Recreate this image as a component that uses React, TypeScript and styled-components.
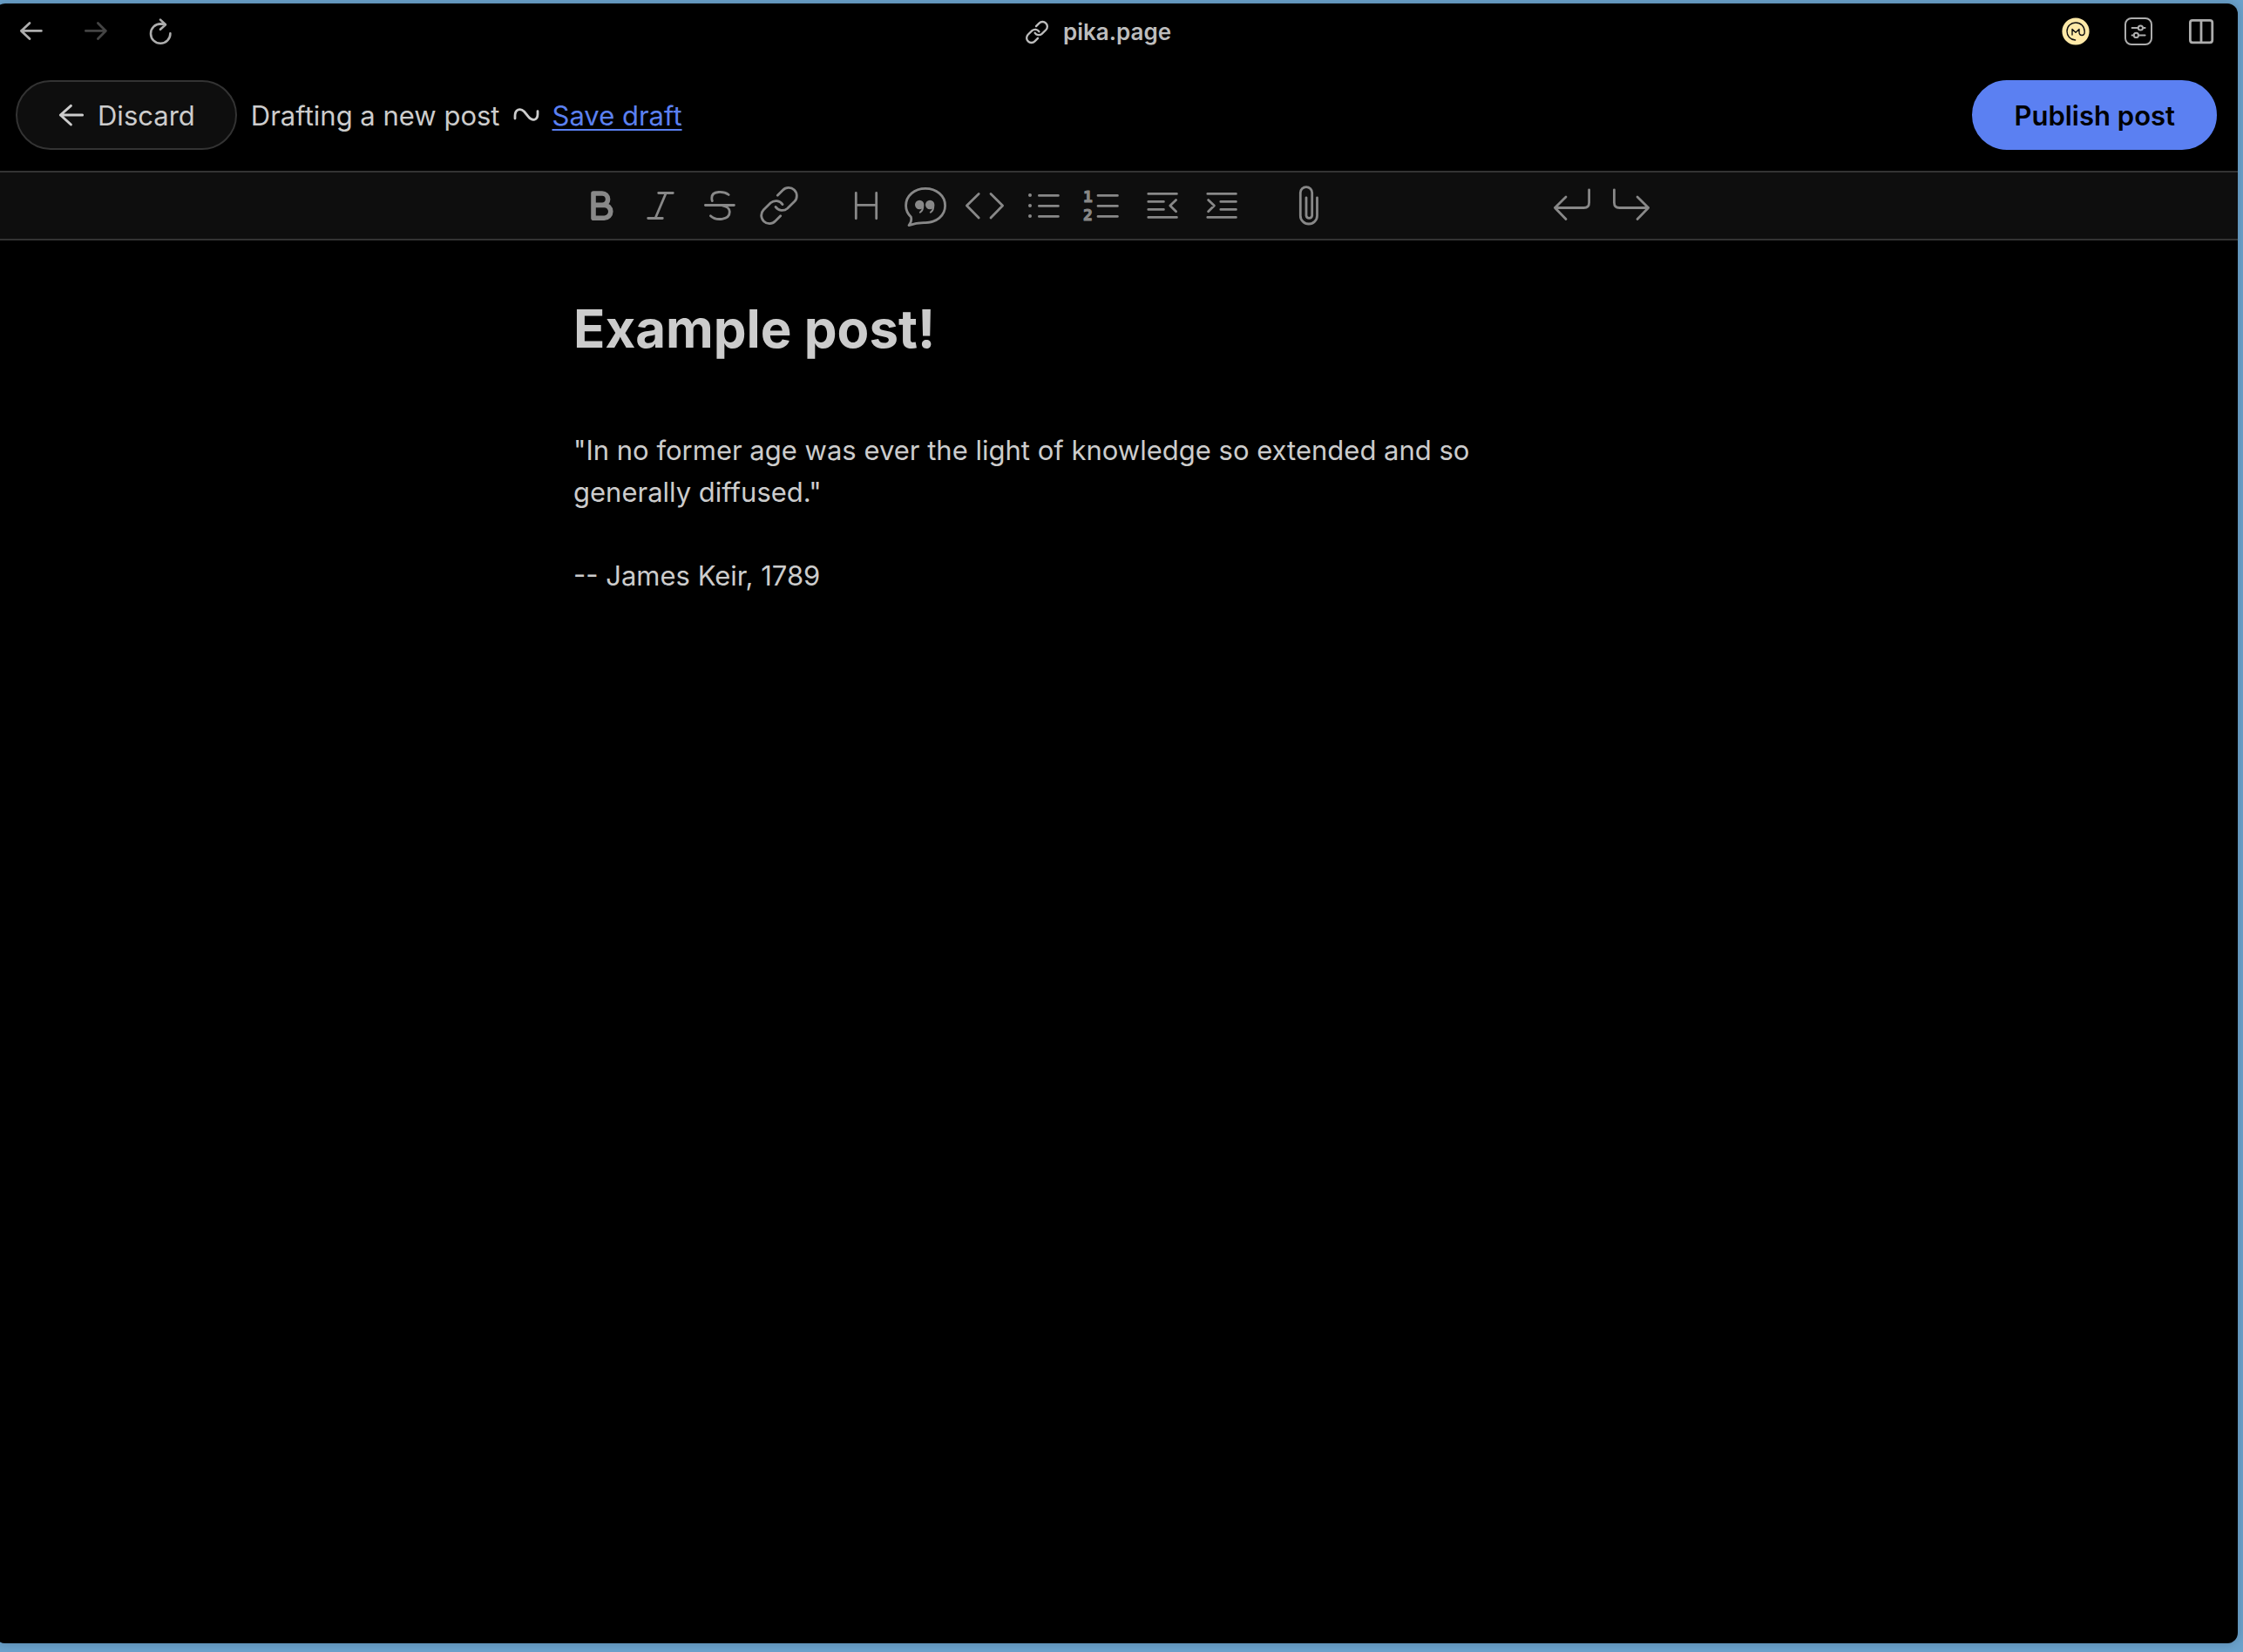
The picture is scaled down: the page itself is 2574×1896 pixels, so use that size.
import React, { useState } from "react";
import styled, { createGlobalStyle } from "styled-components";

const GlobalStyle = createGlobalStyle`
  * { box-sizing: border-box; }
  body {
    margin: 0;
    background: #6ba2cc;
    font-family: Inter, "Liberation Sans", sans-serif;
    color: #ccc;
    overflow-x: hidden;
  }
  button, input, textarea { font: inherit; color: inherit; }
`;

const Desktop = styled.div`
  min-height: 100vh;
  padding: 4px 6px 10px 0;
  display: flex;
  overflow: hidden;
`;

const BrowserWindow = styled.div`
  flex: 1;
  min-width: 0;
  margin-left: -6px;
  background: #000;
  border-radius: 12px;
  box-shadow: 0 0 12px rgba(0, 0, 0, 0.2);
  overflow: hidden;
`;

const BrowserBar = styled.nav`
  height: 64px;
  padding: 0 26px;
  display: grid;
  grid-template-columns: 1fr auto 1fr;
  align-items: center;
`;

const BarGroup = styled.div<{ $end?: boolean }>`
  display: flex;
  gap: ${(p) => (p.$end ? 40 : 42)}px;
  justify-content: ${(p) => (p.$end ? "flex-end" : "flex-start")};
`;

const BarButton = styled.button`
  width: 32px;
  height: 32px;
  padding: 0;
  border: 0;
  background: none;
  color: #adadad;
  display: block;
  &:disabled { color: #444; }
`;

const Address = styled.div`
  display: flex;
  align-items: center;
  gap: 16px;
  padding: 2px 42px 0 0;
  color: #bdbdbd;
  font-size: 26px;
  line-height: 32px;
  font-weight: 600;
`;

const Header = styled.header`
  display: flex;
  align-items: center;
  gap: 16px;
  padding: 24px;
  font-size: 31px;
  line-height: 48px;
`;

const Pill = styled.button<{ $primary?: boolean }>`
  height: 80px;
  padding: 2px 46px 0;
  display: flex;
  align-items: center;
  gap: 14px;
  border-radius: 40px;
  border: 2px solid ${(p) => (p.$primary ? "#5b80f2" : "#333")};
  background: ${(p) => (p.$primary ? "#5b80f2" : "#0e0e0e")};
  color: ${(p) => (p.$primary ? "#000" : "#ccc")};
  font-weight: ${(p) => (p.$primary ? 600 : 400)};
  margin-left: ${(p) => (p.$primary ? "auto" : "0")};
`;

const Status = styled.div`
  display: flex;
  align-items: center;
  gap: 16px;
  padding-top: 2px;
`;

const SaveLink = styled.a`
  color: #5b80f2;
  text-decoration: underline;
  text-decoration-thickness: 2px;
  text-underline-offset: 4px;
`;

const ToolStrip = styled.div`
  border-top: 2px solid #333;
  border-bottom: 2px solid #333;
  background: #0e0e0e;
`;

const Column = styled.div`
  max-width: 1250px;
  margin: 0 auto;
`;

const Tools = styled(Column)`
  height: 76px;
  display: flex;
  align-items: center;
  gap: 32px;
`;

const ToolGroup = styled.div<{ $last?: boolean }>`
  display: flex;
  margin-left: ${(p) => (p.$last ? "auto" : "0")};
`;

const ToolButton = styled.button`
  width: 68px;
  height: 76px;
  padding: 0;
  border: 0;
  background: none;
  color: #888;
  display: flex;
  align-items: center;
  justify-content: center;
`;

const Editor = styled(Column).attrs({ as: "main" })`
  padding: 61px 2px;
  display: flex;
  flex-direction: column;
  gap: 76px;
`;

const TitleInput = styled.input`
  width: 100%;
  height: 80px;
  padding: 0;
  border: 0;
  outline: 0;
  background: none;
  font-size: 60px;
  font-weight: 700;
`;

const BodyInput = styled.textarea`
  width: 100%;
  max-width: 1120px;
  padding: 0;
  border: 0;
  outline: 0;
  resize: none;
  overflow: hidden;
  background: none;
  font-size: 31px;
  line-height: 48px;
  field-sizing: content;
`;

const Line = styled.svg<{ $w?: number }>`
  display: block;
  flex: none;
  overflow: visible;
  fill: none;
  stroke: currentColor;
  stroke-width: ${(p) => p.$w ?? 2.8};
  stroke-linecap: round;
  stroke-linejoin: round;
`;

const Numeral = styled.text`
  fill: currentColor;
  stroke: currentColor;
  stroke-width: 1px;
  font: 700 18px "DejaVu Sans Mono", monospace;
`;

const chain = "M22.3 12.3 L28.3 6.3 A9.3 9.3 0 0 1 41.7 19.3 L33.6 27.2 A9.2 9.2 0 0 1 20 25.4";

const icons = {
  bold: (
    <path
      strokeWidth="5.6"
      d="M15 10 H25 a6.6 6.7 0 0 1 0 13.4 H15 H27.4 a7.4 7.4 0 0 1 0 14.8 H15 V10 Z"
    />
  ),
  italic: <path d="M21.7 9.5 H38.3 M9.7 38.5 H26.3 M30.3 9.5 L18 38.5" />,
  strike: (
    <path d="M7.4 23.5 H40.4 M34.2 11.5 C29 7.6 14.8 6.2 14.8 15.2 C14.8 16.5 14.9 17.6 15.4 18.6 M27 24 C32 25 35.3 27 35.3 31 C35.3 41 19.5 41.5 13.4 35.7" />
  ),
  link: (
    <>
      <path d={chain} />
      <path d={chain} transform="rotate(180 24 24)" />
    </>
  ),
  heading: <path d="M12.3 9.4 V38.8 M35.7 9.4 V38.8 M12.3 23.4 H35.7" />,
  quote: (
    <>
      <path d="M7.4 37 C3.4 33.2 1.6 28.8 1.6 24 C1.6 12.5 11.5 4.4 24 4.4 S46.6 12.5 46.6 24 S36.5 43.6 24 43.6 C19 43.6 14.5 43.2 5 46.6 C7.5 43.5 8.2 40 7.4 37 Z" />
      <circle cx="17.2" cy="23" r="3.8" fill="currentColor" />
      <circle cx="29.2" cy="23" r="3.8" fill="currentColor" />
      <path strokeWidth="2" d="M21.2 23.5 C21.6 27.5 20.4 30 17.8 31.8 M33.2 23.5 C33.6 27.5 32.4 30 29.8 31.8" />
    </>
  ),
  code: <path d="M17.2 10.4 L3.4 24 L17.2 38 M31 10.4 L44.6 24 L31 38" />,
  bullets: (
    <>
      <path d="M18.4 12.4 H40.4 M18.4 24.4 H40.4 M18.4 36.4 H40.4" />
      <path strokeWidth="4" d="M8 12 h.01 M8 24 h.01 M8 36 h.01" />
    </>
  ),
  numbers: (
    <>
      <path d="M18 12.4 H40.4 M18 24.4 H40.4 M18 36.4 H40.4" />
      <Numeral x="1" y="20">1</Numeral>
      <Numeral x="1" y="41">2</Numeral>
    </>
  ),
  outdent: <path d="M7.8 10.4 H40.4 M7.8 19.4 H25.4 M7.8 28.4 H25.4 M7.8 37.4 H40.4 M39.6 17.6 L32.8 24 L39.6 30.8" />,
  indent: <path d="M7.8 10.4 H40.4 M22.8 19.4 H40.4 M22.8 28.4 H40.4 M7.8 37.4 H40.4 M8.6 17.6 L15.4 24 L8.6 30.8" />,
  attach: (
    <path d="M33.5 14.8 V35.4 A9.6 9.6 0 0 1 14.3 35.4 V9.3 A6.7 6.7 0 0 1 27.7 9.3 V35.5 A3.4 3.4 0 0 1 21 35.5 V14.8" />
  ),
  undo: <path d="M43.6 5.8 V20.5 Q43.6 26.5 37.6 26.5 H4.4 M17 14 L4.4 26.5 L17 39.4" />,
  redo: <path d="M4.4 5.8 V20.5 Q4.4 26.5 10.4 26.5 H43.6 M31 14 L43.6 26.5 L31 39.4" />,
};

type IconName = keyof typeof icons;

const groups: [IconName, string][][] = [
  [["bold", "Bold"], ["italic", "Italic"], ["strike", "Strikethrough"], ["link", "Link"]],
  [
    ["heading", "Heading"],
    ["quote", "Quote"],
    ["code", "Code"],
    ["bullets", "Bulleted list"],
    ["numbers", "Numbered list"],
    ["outdent", "Decrease indent"],
    ["indent", "Increase indent"],
  ],
  [["attach", "Attach file"]],
  [["undo", "Undo"], ["redo", "Redo"]],
];

function BarIcon({ children, w = 2.8 }: { children: React.ReactNode; w?: number }) {
  return (
    <Line width="32" height="32" viewBox="0 0 32 32" $w={w} aria-hidden="true">
      {children}
    </Line>
  );
}

export default function App() {
  const [title, setTitle] = useState("Example post!");
  const [body, setBody] = useState(
    '"In no former age was ever the light of knowledge so extended and so generally diffused."\n\n-- James Keir, 1789'
  );

  return (
    <>
      <GlobalStyle />
      <Desktop>
        <BrowserWindow>
          <BrowserBar aria-label="Browser">
            <BarGroup>
              <BarButton aria-label="Back">
                <BarIcon><path d="M4.4 15.4 H27.4 M14 6.4 L4.4 15.4 L14 24.6" /></BarIcon>
              </BarButton>
              <BarButton aria-label="Forward" disabled>
                <BarIcon><path d="M4.4 15.4 H27.4 M18.4 6.4 L27.4 15.4 L18.4 24.6" /></BarIcon>
              </BarButton>
              <BarButton aria-label="Reload">
                <BarIcon w={2.6}>
                  <path d="M27.4 18.4 A11.2 11.2 0 1 1 16.2 7.4 L21.6 8 M16 2.6 L22 8.2 L16 13.8" />
                </BarIcon>
              </BarButton>
            </BarGroup>
            <Address>
              <Line width="28" height="28" viewBox="0 0 48 48" $w={4} aria-hidden="true">
                <path d={chain} />
                <path d={chain} transform="rotate(180 24 24)" />
              </Line>
              <span>pika.page</span>
            </Address>
            <BarGroup $end>
              <BarButton aria-label="Extension">
                <BarIcon w={1.4}>
                  <circle cx="16" cy="16" r="15.6" fill="#ffe9a8" stroke="none" />
                  <path
                    stroke="#111"
                    d="M15.6 26 C9.5 25.5 6 21 6 16 C6 10 10.4 6 16 6 C22 6 26.2 10.4 26.2 16 V17 C26.2 21.6 20 21.6 20 17 V13.4 L16 17.2 L12 13.4 V20"
                  />
                </BarIcon>
              </BarButton>
              <BarButton aria-label="Site controls">
                <BarIcon w={2}>
                  <rect x="1" y="1" width="30" height="30" rx="7" />
                  <path d="M8.6 12 H15.4 M21.4 12 H23.6 M8.6 20.4 H10.4 M16.4 20.4 H23.6" />
                  <circle cx="18.4" cy="12" r="2.6" />
                  <circle cx="13.4" cy="20.4" r="2.6" />
                </BarIcon>
              </BarButton>
              <BarButton aria-label="Split view">
                <BarIcon><path d="M6 3.4 H26 Q28.8 3.4 28.8 6 V26 Q28.8 28.8 26 28.8 H6 Q3.4 28.8 3.4 26 V6 Q3.4 3.4 6 3.4 Z M16 3.4 V28.8" /></BarIcon>
              </BarButton>
            </BarGroup>
          </BrowserBar>

          <Header>
            <Pill>
              <Line width="32" height="32" viewBox="0 0 32 32" $w={3} aria-hidden="true">
                <path d="M3.4 15 H28.6 M15.4 4.4 L3.4 15 L15.4 26" />
              </Line>
              Discard
            </Pill>
            <Status>
              <span>Drafting a new post</span>
              <Line width="28" height="32" viewBox="2 0 28 32" aria-hidden="true">
                <path d="M3 19 V16 C3 8.5 9 6.5 13.5 11 L18.5 17.2 C23 22.6 29 21 29 14 V10.6" />
              </Line>
              <SaveLink href="#save">Save draft</SaveLink>
            </Status>
            <Pill $primary>Publish post</Pill>
          </Header>

          <ToolStrip role="toolbar" aria-label="Formatting">
            <Tools>
              {groups.map((group, i) => (
                <ToolGroup key={i} $last={i === groups.length - 1}>
                  {group.map(([name, label]) => (
                    <ToolButton key={name} aria-label={label}>
                      <Line width="48" height="48" viewBox="0 0 48 48" aria-hidden="true">
                        {icons[name]}
                      </Line>
                    </ToolButton>
                  ))}
                </ToolGroup>
              ))}
            </Tools>
          </ToolStrip>

          <Editor>
            <TitleInput aria-label="Post title" value={title} onChange={(e) => setTitle(e.target.value)} />
            <BodyInput aria-label="Post body" value={body} onChange={(e) => setBody(e.target.value)} />
          </Editor>
        </BrowserWindow>
      </Desktop>
    </>
  );
}
